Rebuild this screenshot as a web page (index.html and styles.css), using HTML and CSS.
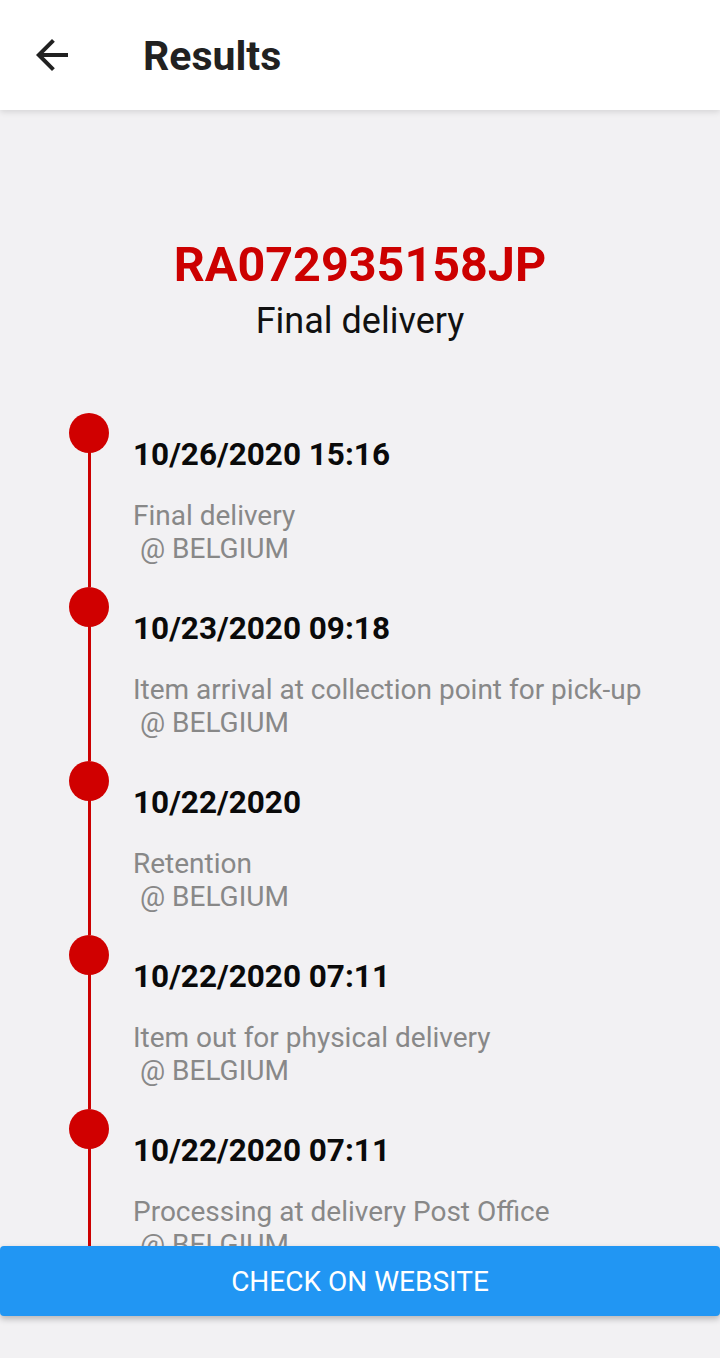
FILE: index.html
```html
<!DOCTYPE html>
<html>
<head>
    <title>Results</title>
    <link rel="stylesheet" href="styles.css">
</head>
<body>
    <div class="screen">
        <header class="appbar">
            <svg class="back" viewBox="0 0 24 24" width="48" height="48">
                <path d="M20 11H7.83l5.59-5.59L12 4l-8 8 8 8 1.41-1.41L7.83 13H20v-2z"/>
            </svg>
            <h1>Results</h1>
        </header>

        <main class="content">
            <div class="summary">
                <div class="tracking">RA072935158JP</div>
                <div class="status">Final delivery</div>
            </div>

            <ul class="timeline">
                <li class="event">
                    <div class="date">10/26/2020 15:16</div>
                    <div class="desc">Final delivery<br>&nbsp;@ BELGIUM</div>
                </li>
                <li class="event">
                    <div class="date">10/23/2020 09:18</div>
                    <div class="desc">Item arrival at collection point for pick-up<br>&nbsp;@ BELGIUM</div>
                </li>
                <li class="event">
                    <div class="date">10/22/2020</div>
                    <div class="desc">Retention<br>&nbsp;@ BELGIUM</div>
                </li>
                <li class="event">
                    <div class="date">10/22/2020 07:11</div>
                    <div class="desc">Item out for physical delivery<br>&nbsp;@ BELGIUM</div>
                </li>
                <li class="event">
                    <div class="date">10/22/2020 07:11</div>
                    <div class="desc">Processing at delivery Post Office<br>&nbsp;@ BELGIUM</div>
                </li>
            </ul>
        </main>

        <footer class="actions">
            <a href="#" class="button">CHECK ON WEBSITE</a>
        </footer>
    </div>
</body>
</html>
```

FILE: styles.css
```css
* {
    box-sizing: border-box;
}
body {
    margin: 0;
    font-family: Roboto, "Liberation Sans", sans-serif;
    background: #f2f1f3;
}
.screen {
    width: 720px;
    height: 1358px;
    display: flex;
    flex-direction: column;
    overflow: hidden;
}
.appbar {
    height: 110px;
    flex: none;
    background: #fff;
    display: flex;
    align-items: center;
    padding-left: 28px;
    box-shadow: 0 2px 6px rgba(0, 0, 0, 0.12);
    position: relative;
    z-index: 2;
}
.back {
    fill: #212121;
}
.appbar h1 {
    margin: 2px 0 0 67px;
    font-size: 41px;
    font-weight: 700;
    color: #212121;
}
.content {
    flex: 1;
    overflow: hidden;
    padding-top: 126px;
}
.summary {
    text-align: center;
}
.tracking {
    font-size: 48.5px;
    line-height: 58px;
    font-weight: 700;
    color: #cc0000;
}
.status {
    margin-top: 5px;
    font-size: 36px;
    line-height: 44px;
    color: #111;
}
.timeline {
    list-style: none;
    margin: 70px 0 0;
    padding: 0;
}
.event {
    position: relative;
    height: 174px;
    padding: 22px 0 0 133px;
}
.event::before {
    content: "";
    position: absolute;
    left: 88px;
    top: 20px;
    bottom: 0;
    width: 3px;
    background: #cc0000;
}
.event::after {
    content: "";
    position: absolute;
    left: 69px;
    top: 0;
    width: 40px;
    height: 40px;
    border-radius: 50%;
    background: #d00000;
}
.date {
    font-size: 31.5px;
    line-height: 40px;
    font-weight: 700;
    color: #0a0a0a;
}
.desc {
    margin-top: 24px;
    font-size: 28px;
    line-height: 33px;
    color: #888;
}
.actions {
    height: 112px;
    flex: none;
}
.button {
    display: block;
    height: 70px;
    line-height: 72px;
    text-align: center;
    background: #2196f3;
    color: #fff;
    font-size: 28px;
    text-decoration: none;
    border-radius: 4px;
    box-shadow: 0 3px 6px rgba(0, 0, 0, 0.25);
}
```
